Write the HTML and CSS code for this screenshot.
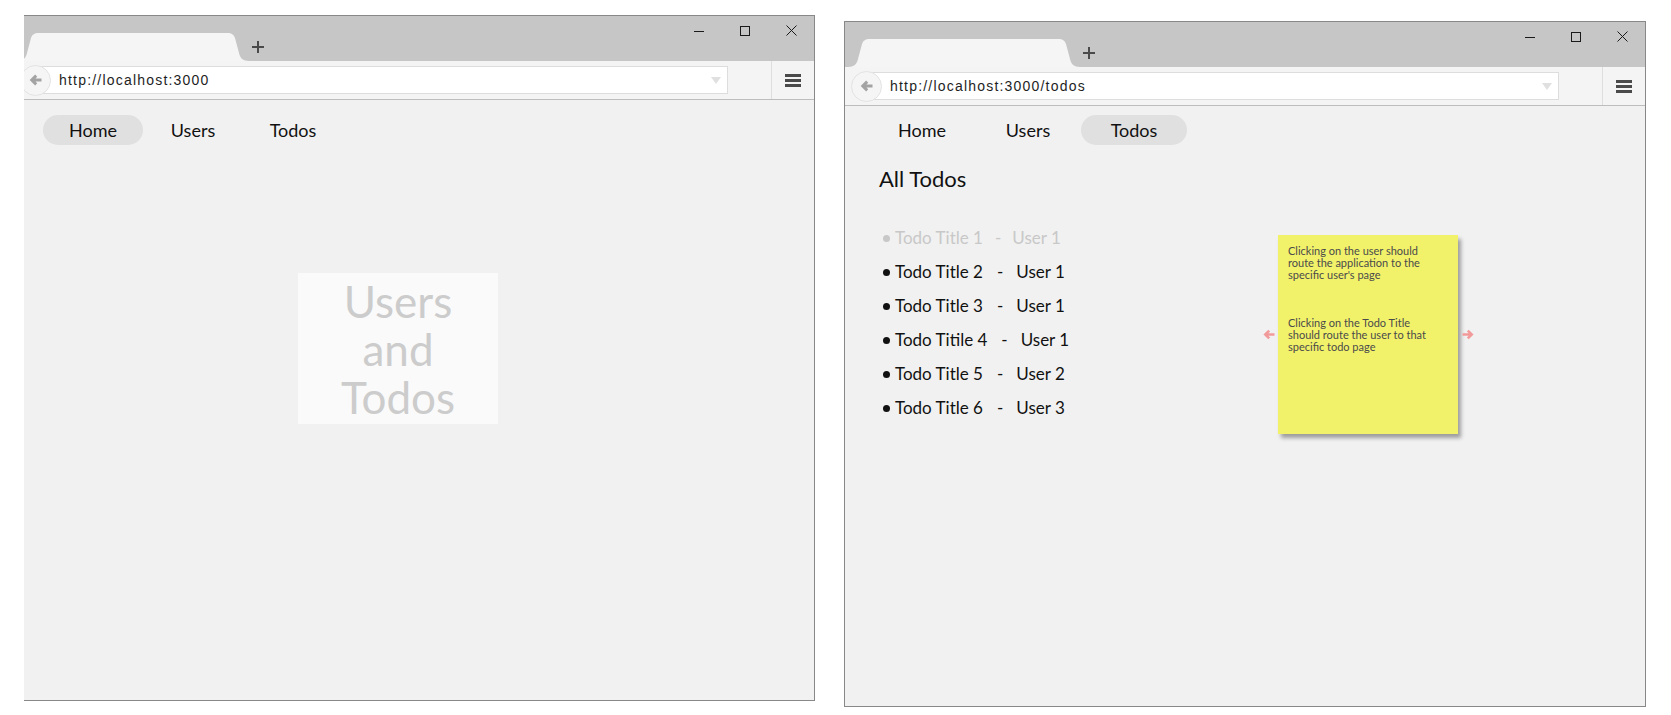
FILE: index.html
```html
<!DOCTYPE html>
<html>
<head>
<meta charset="utf-8">
<title>Users and Todos</title>
<link rel="stylesheet" href="styles.css">
</head>
<body>
<div class="stage">
  <section class="window window--home">
    <div class="browser browser--cropped">
      <header class="titlebar">
        <svg class="tab" width="232" height="28" viewBox="0 0 232 28"><path d="M0 28 C6 28 9 25 10 20 L14 5 C15 2 17 0 22 0 L210 0 C215 0 217 2 218 5 L222 20 C223 25 226 28 232 28 Z" fill="#f5f5f5"/></svg>
        <svg class="newtab" width="12" height="12" viewBox="0 0 12 12"><path d="M6 0V12M0 6H12" stroke="#4a4a4a" stroke-width="2"/></svg>
        <div class="controls">
          <span class="ctl"><svg width="10" height="10" viewBox="0 0 10 10"><path d="M0 5.5H10" stroke="#1a1a1a" stroke-width="1"/></svg></span>
          <span class="ctl"><svg width="10" height="10" viewBox="0 0 10 10"><rect x="0.5" y="0.5" width="9" height="9" fill="none" stroke="#1a1a1a" stroke-width="1"/></svg></span>
          <span class="ctl"><svg width="11" height="11" viewBox="0 0 11 11"><path d="M0.5 0.5L10.5 10.5M10.5 0.5L0.5 10.5" stroke="#1a1a1a" stroke-width="1"/></svg></span>
        </div>
      </header>
      <div class="addressbar">
        <span class="back"><svg width="13" height="12" viewBox="0 0 13 12"><path d="M12.5 6H3.5M7.2 1.6L2.8 6L7.2 10.4" fill="none" stroke="#a3a3a3" stroke-width="3"/></svg></span>
        <div class="urlfield"><span class="url">http://localhost:3000</span><span class="drop"></span></div>
        <div class="menu"><svg width="16" height="13" viewBox="0 0 16 13"><rect y="0" width="16" height="3" fill="#4a4a4a"/><rect y="5" width="16" height="3" fill="#4a4a4a"/><rect y="10" width="16" height="3" fill="#4a4a4a"/></svg></div>
      </div>
      <main class="page page--home">
        <nav class="nav nav--home">
          <a class="nav-item is-active">Home</a>
          <a class="nav-item">Users</a>
          <a class="nav-item">Todos</a>
        </nav>
        <div class="hero">Users<br>and<br>Todos</div>
      </main>
    </div>
  </section>

  <section class="window window--todos">
    <div class="browser">
      <header class="titlebar">
        <svg class="tab" width="232" height="28" viewBox="0 0 232 28"><path d="M0 28 C6 28 9 25 10 20 L14 5 C15 2 17 0 22 0 L210 0 C215 0 217 2 218 5 L222 20 C223 25 226 28 232 28 Z" fill="#f5f5f5"/></svg>
        <svg class="newtab" width="12" height="12" viewBox="0 0 12 12"><path d="M6 0V12M0 6H12" stroke="#4a4a4a" stroke-width="2"/></svg>
        <div class="controls">
          <span class="ctl"><svg width="10" height="10" viewBox="0 0 10 10"><path d="M0 5.5H10" stroke="#1a1a1a" stroke-width="1"/></svg></span>
          <span class="ctl"><svg width="10" height="10" viewBox="0 0 10 10"><rect x="0.5" y="0.5" width="9" height="9" fill="none" stroke="#1a1a1a" stroke-width="1"/></svg></span>
          <span class="ctl"><svg width="11" height="11" viewBox="0 0 11 11"><path d="M0.5 0.5L10.5 10.5M10.5 0.5L0.5 10.5" stroke="#1a1a1a" stroke-width="1"/></svg></span>
        </div>
      </header>
      <div class="addressbar">
        <span class="back"><svg width="13" height="12" viewBox="0 0 13 12"><path d="M12.5 6H3.5M7.2 1.6L2.8 6L7.2 10.4" fill="none" stroke="#a3a3a3" stroke-width="3"/></svg></span>
        <div class="urlfield"><span class="url">http://localhost:3000/todos</span><span class="drop"></span></div>
        <div class="menu"><svg width="16" height="13" viewBox="0 0 16 13"><rect y="0" width="16" height="3" fill="#4a4a4a"/><rect y="5" width="16" height="3" fill="#4a4a4a"/><rect y="10" width="16" height="3" fill="#4a4a4a"/></svg></div>
      </div>
      <main class="page page--todos">
        <nav class="nav nav--todos">
          <a class="nav-item">Home</a>
          <a class="nav-item">Users</a>
          <a class="nav-item is-active">Todos</a>
        </nav>
        <div class="todos">
          <h1 class="todos-title">All Todos</h1>
          <div class="todos-row">
            <ul class="todo-list">
              <li class="todo is-faded"><span class="bullet"></span><span class="todo-name">Todo Title 1</span><span class="dash dash--tight">-</span><span class="todo-user">User 1</span></li>
              <li class="todo"><span class="bullet"></span><span class="todo-name">Todo Title 2</span><span class="dash">-</span><span class="todo-user">User 1</span></li>
              <li class="todo"><span class="bullet"></span><span class="todo-name">Todo Title 3</span><span class="dash">-</span><span class="todo-user">User 1</span></li>
              <li class="todo"><span class="bullet"></span><span class="todo-name">Todo Titile 4</span><span class="dash">-</span><span class="todo-user">User 1</span></li>
              <li class="todo"><span class="bullet"></span><span class="todo-name">Todo Title 5</span><span class="dash">-</span><span class="todo-user">User 2</span></li>
              <li class="todo"><span class="bullet"></span><span class="todo-name">Todo Title 6</span><span class="dash">-</span><span class="todo-user">User 3</span></li>
            </ul>
            <div class="note-wrap">
              <svg class="note-arrow note-arrow--left" width="12" height="11" viewBox="0 0 12 11"><path d="M11.5 5.5H3M6.2 1.6L2.3 5.5L6.2 9.4" fill="none" stroke="#f29a9a" stroke-width="2.6"/></svg>
              <div class="note">
                <p>Clicking on the user should<br>route the application to the<br>specific user's page</p>
                <p>Clicking on the Todo Title<br>should route the user to that<br>specific todo page</p>
              </div>
              <svg class="note-arrow note-arrow--right" width="12" height="11" viewBox="0 0 12 11"><path d="M0.5 5.5H9M5.8 1.6L9.7 5.5L5.8 9.4" fill="none" stroke="#f29a9a" stroke-width="2.6"/></svg>
            </div>
          </div>
        </div>
      </main>
    </div>
  </section>
</div>
</body>
</html>
```

FILE: styles.css
```css
* { box-sizing: border-box; }

html, body {
  margin: 0;
  padding: 0;
  background: #ffffff;
}

body {
  font-family: Lato, "Noto Sans", sans-serif;
  color: #111111;
}

.stage {
  display: flex;
  align-items: flex-start;
  padding-left: 24px;
  gap: 29px;
}

.window {
  overflow: hidden;
  flex: none;
  border-top: 1px solid #888888;
  border-right: 1px solid #888888;
  border-bottom: 1px solid #888888;
}

.window--home {
  margin-top: 15px;
  width: 791px;
}

.window--todos {
  margin-top: 21px;
  width: 802px;
  border-left: 1px solid #888888;
}

.browser {
  width: 800px;
  display: flex;
  flex-direction: column;
}

.browser--cropped {
  margin-left: -10px;
}

/* title bar */
.titlebar {
  height: 45px;
  background: #c6c6c6;
  display: flex;
  align-items: flex-end;
}

.tab {
  display: block;
  margin-left: 3px;
  flex: none;
}

.newtab {
  display: block;
  align-self: flex-start;
  margin-top: 25px;
  margin-left: 3px;
  flex: none;
}

.controls {
  margin-left: auto;
  align-self: flex-start;
  display: flex;
}

.ctl {
  width: 46px;
  height: 29px;
  display: flex;
  align-items: center;
  justify-content: center;
}

.ctl svg { display: block; }

/* address bar */
.addressbar {
  height: 39px;
  background: #f4f4f4;
  border-bottom: 1px solid #bdbdbd;
  display: flex;
  align-items: center;
}

.back {
  position: relative;
  z-index: 1;
  flex: none;
  width: 31px;
  height: 31px;
  margin-left: 6px;
  border-radius: 50%;
  background: #f5f5f5;
  border: 1px solid #e3e3e3;
  display: flex;
  align-items: center;
  justify-content: center;
}

.back svg { display: block; }

.urlfield {
  flex: none;
  margin-left: -16px;
  width: 693px;
  height: 28px;
  background: #ffffff;
  border: 1px solid #dddddd;
  display: flex;
  align-items: center;
  padding-left: 23px;
  padding-right: 6px;
}

.url {
  font-family: "Liberation Sans", Arial, sans-serif;
  font-size: 14px;
  letter-spacing: 1.2px;
  color: #1e1e1e;
}

.drop {
  margin-left: auto;
  width: 0;
  height: 0;
  border-left: 5px solid transparent;
  border-right: 5px solid transparent;
  border-top: 7px solid #e0e0e0;
}

.menu {
  margin-left: auto;
  align-self: stretch;
  width: 43px;
  border-left: 1px solid #dedede;
  display: flex;
  align-items: center;
  justify-content: center;
}

.menu svg { display: block; }

/* page */
.page {
  height: 600px;
  background: #f1f1f1;
}

.page--home { padding-top: 15px; }
.page--todos { padding-top: 9px; }

.nav {
  display: flex;
}

.nav--home { margin-left: 29px; }
.nav--todos { margin-left: 24px; }

.nav-item {
  height: 30px;
  border-radius: 15px;
  display: flex;
  align-items: center;
  justify-content: center;
  font-size: 18px;
  color: #111111;
}

.nav--home .nav-item { width: 100px; }
.nav--todos .nav-item { width: 106px; }

.nav-item.is-active { background: #e0e0e0; }

.hero {
  margin-top: 128px;
  margin-left: 284px;
  width: 200px;
  height: 151px;
  padding-top: 4px;
  background: #fafafa;
  color: #cccccc;
  font-size: 44px;
  line-height: 48px;
  text-align: center;
}

/* todos */
.todos {
  padding-left: 34px;
}

.todos-title {
  margin: 20px 0 0;
  font-size: 22px;
  line-height: 28px;
  font-weight: normal;
  color: #111111;
}

.todos-row {
  display: flex;
  align-items: flex-start;
  margin-top: 28px;
}

.todo-list {
  flex: 0 0 384px;
  list-style: none;
  margin: 0;
  padding: 0 0 0 4px;
}

.todo {
  font-size: 17px;
  line-height: 34px;
  color: #111111;
  white-space: nowrap;
}

.todo.is-faded { color: #c8c8c8; }

.bullet {
  display: inline-block;
  width: 7px;
  height: 7px;
  border-radius: 50%;
  background: currentColor;
  margin-right: 5px;
  vertical-align: middle;
  position: relative;
  top: -1px;
}

.dash { margin: 0 13px 0 14px; }
.dash--tight { margin: 0 11px 0 12px; }

.note-wrap {
  margin-top: 14px;
  display: flex;
  align-items: center;
}

.note-arrow { display: block; flex: none; }
.note-arrow--left { margin-right: 3px; }
.note-arrow--right { margin-left: 4px; }

.note {
  width: 180px;
  height: 199px;
  background: #f2f26a;
  box-shadow: 3px 4px 4px rgba(0, 0, 0, 0.35);
  padding: 10px 10px 0;
  font-size: 11px;
  line-height: 12px;
  color: #4a4a4a;
}

.note p { margin: 0; }
.note p + p { margin-top: 36px; }
```
